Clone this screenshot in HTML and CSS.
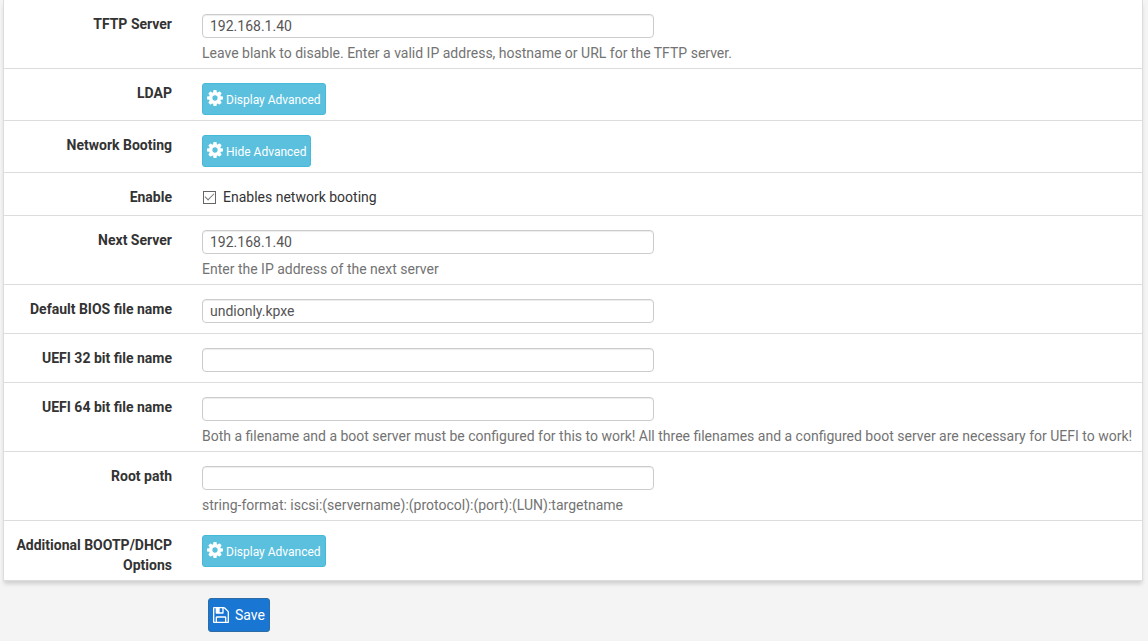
FILE: index.html
```html
<!DOCTYPE html>
<html lang="en">
<head>
    <meta charset="UTF-8">
    <meta name="viewport" content="width=device-width, initial-scale=1.0">
    <title>DHCP Server</title>
    <link rel="stylesheet" href="styles.css">
</head>
<body>
    <svg class="sprite" aria-hidden="true">
        <symbol id="icon-cog" viewBox="0 0 1536 1536">
            <path fill="currentColor" d="M1024 768q0-106-75-181t-181-75-181 75-75 181 75 181 181 75 181-75 75-181zm512-109v222q0 12-8 23t-20 13l-185 28q-19 54-39 91 35 50 107 138 10 12 10 25t-9 23q-27 37-99 108t-94 71q-12 0-26-9l-138-108q-44 23-91 38-16 136-29 186-7 28-36 28H657q-14 0-24.500-8.500T621 1506l-28-184q-49-16-90-37l-141 107q-10 9-25 9-14 0-25-11-126-114-165-168-7-10-7-23 0-12 8-23 15-21 51-66.500t54-70.500q-27-50-41-99L29 913q-13-2-21-12.500T0 877V655q0-12 8-23t19-13l186-28q14-46 39-92-40-57-107-138-10-12-10-24 0-10 9-23 26-36 98.500-107.500T337 135q13 0 26 10l138 107q44-23 91-38 16-136 29-186 7-28 36-28h222q14 0 24.500 8.500T915 30l28 184q49 16 90 37l142-107q9-9 24-9 13 0 25 10 129 119 165 170 7 8 7 22 0 12-8 23-15 21-51 66.500t-54 70.500q26 50 41 98l183 28q13 2 21 12.500t8 23.500z"/>
        </symbol>
        <symbol id="icon-save" viewBox="0 0 1536 1536">
            <path fill="currentColor" d="M384 1408h768v-384H384v384zm896 0h128V512q0-14-10-38.500t-20-34.500l-281-281q-10-10-34-20t-39-10v416q0 40-28 68t-68 28H352q-40 0-68-28t-28-68V128H128v1280h128V992q0-40 28-68t68-28h832q40 0 68 28t28 68v416zM896 480V160q0-13-9.500-22.500T864 128H672q-13 0-22.500 9.500T640 160v320q0 13 9.500 22.500T672 512h192q13 0 22.500-9.500T896 480zm640 32v928q0 40-28 68t-68 28H96q-40 0-68-28t-28-68V96q0-40 28-68T96 0h928q40 0 88 20t76 48l280 280q28 28 48 76t20 88z"/>
        </symbol>
    </svg>

    <form class="form-horizontal">
        <div class="panel">
            <div class="form-group">
                <label class="control-label" for="tftp">TFTP Server</label>
                <div class="controls">
                    <input class="form-control" type="text" id="tftp" value="192.168.1.40">
                    <span class="help-block">Leave blank to disable. Enter a valid IP address, hostname or URL for the TFTP server.</span>
                </div>
            </div>
            <div class="form-group">
                <label class="control-label" for="btnadvldap">LDAP</label>
                <div class="controls">
                    <button class="btn btn-info" type="button" id="btnadvldap"><svg class="icon icon-cog"><use href="#icon-cog"/></svg>Display Advanced</button>
                </div>
            </div>
            <div class="form-group">
                <label class="control-label" for="btnadvnetboot">Network Booting</label>
                <div class="controls">
                    <button class="btn btn-info" type="button" id="btnadvnetboot"><svg class="icon icon-cog"><use href="#icon-cog"/></svg>Hide Advanced</button>
                </div>
            </div>
            <div class="form-group">
                <label class="control-label" for="netboot">Enable</label>
                <div class="controls">
                    <label class="checkbox"><input type="checkbox" id="netboot" checked>Enables network booting</label>
                </div>
            </div>
            <div class="form-group">
                <label class="control-label" for="nextserver">Next Server</label>
                <div class="controls">
                    <input class="form-control" type="text" id="nextserver" value="192.168.1.40">
                    <span class="help-block">Enter the IP address of the next server</span>
                </div>
            </div>
            <div class="form-group">
                <label class="control-label" for="filename">Default BIOS file name</label>
                <div class="controls">
                    <input class="form-control" type="text" id="filename" value="undionly.kpxe">
                </div>
            </div>
            <div class="form-group">
                <label class="control-label" for="filename32">UEFI 32 bit file name</label>
                <div class="controls">
                    <input class="form-control" type="text" id="filename32">
                </div>
            </div>
            <div class="form-group">
                <label class="control-label" for="filename64">UEFI 64 bit file name</label>
                <div class="controls">
                    <input class="form-control" type="text" id="filename64">
                    <span class="help-block">Both a filename and a boot server must be configured for this to work! All three filenames and a configured boot server are necessary for UEFI to work!</span>
                </div>
            </div>
            <div class="form-group">
                <label class="control-label" for="rootpath">Root path</label>
                <div class="controls">
                    <input class="form-control" type="text" id="rootpath">
                    <span class="help-block">string-format: iscsi:(servername):(protocol):(port):(LUN):targetname</span>
                </div>
            </div>
            <div class="form-group">
                <label class="control-label" for="btnadvopts">Additional BOOTP/DHCP Options</label>
                <div class="controls">
                    <button class="btn btn-info" type="button" id="btnadvopts"><svg class="icon icon-cog"><use href="#icon-cog"/></svg>Display Advanced</button>
                </div>
            </div>
        </div>
        <div class="form-actions">
            <button class="btn btn-primary" type="submit"><svg class="icon icon-save"><use href="#icon-save"/></svg>Save</button>
        </div>
    </form>
</body>
</html>
```

FILE: styles.css
```css
* {
    box-sizing: border-box;
}
body {
    margin: 0;
    background: #f4f4f4;
    color: #333;
    font-family: Roboto, "Liberation Sans", sans-serif;
    font-size: 14px;
    line-height: 20px;
}
.sprite {
    display: none;
}
.panel {
    margin: 0 5px 0 3px;
    background: #fff;
    border: 1px solid #ddd;
    border-top: none;
    box-shadow: 0 4px 4px -1px rgba(0,0,0,0.15);
}
.form-group {
    display: grid;
    grid-template-columns: 168px 1fr;
    gap: 30px;
    padding: 14px 5px 5px 0;
    border-bottom: 1px solid #ddd;
}
.form-group:last-child {
    border-bottom: none;
}
.control-label {
    padding-left: 10px;
    font-weight: 700;
    text-align: right;
}
.form-control {
    display: block;
    width: 100%;
    max-width: 452px;
    height: 24px;
    margin: 0 0 5px;
    padding: 0 7px;
    border: 1px solid #ccc;
    border-radius: 4px;
    box-shadow: inset 0 1px 1px rgba(0,0,0,0.075);
    background: #fff;
    color: #555;
    font: inherit;
}
.help-block {
    display: block;
    color: #737373;
}
.checkbox {
    display: flex;
    align-items: center;
    gap: 7px;
    margin-bottom: 3px;
}
.checkbox input {
    appearance: none;
    display: grid;
    place-items: center;
    width: 13px;
    height: 13px;
    margin: 0 0 0 1px;
    border: 1px solid #666;
    background: #fff;
}
.checkbox input:checked::before {
    content: "";
    width: 8px;
    height: 4px;
    margin-bottom: 3px;
    border: solid #777;
    border-width: 0 0 1px 1px;
    transform: rotate(-45deg);
}
.btn {
    display: inline-flex;
    align-items: center;
    border: 1px solid;
    border-radius: 3px;
    color: #fff;
    font: inherit;
    cursor: pointer;
}
.btn-info {
    height: 32px;
    padding: 2px 4px 0;
    background: #5bc0de;
    border-color: #46b8da;
    font-size: 12px;
}
.btn-primary {
    height: 34px;
    padding: 0 4px;
    background: #1976d2;
    border-color: #2e6da4;
}
.controls .btn {
    display: flex;
}
.icon {
    flex: none;
}
.icon-cog {
    width: 16px;
    height: 16px;
    margin: 0 3px 5px 0;
}
.icon-save {
    width: 16px;
    height: 16px;
    margin-right: 6px;
}
.form-actions {
    display: flex;
    padding: 17px 0 9px 208px;
}
```
